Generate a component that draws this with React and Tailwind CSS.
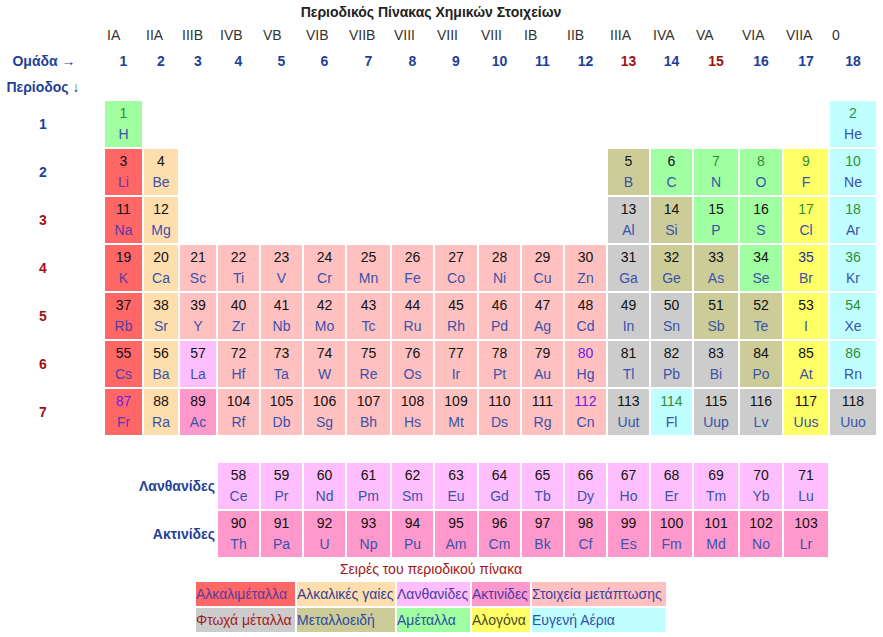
import React from "react";

const CAT = {
  alkali: "bg-[#ff6666]",
  earth: "bg-[#ffdead]",
  trans: "bg-[#ffc0c0]",
  poor: "bg-[#cccccc]",
  metalloid: "bg-[#cccc99]",
  nonmetal: "bg-[#a0ffa0]",
  halogen: "bg-[#ffff66]",
  noble: "bg-[#c0ffff]",
  lan: "bg-[#ffbfff]",
  act: "bg-[#ff99cc]",
};

const GREEN = [1, 2, 7, 8, 9, 10, 17, 18, 36, 54, 86, 114];
const PURPLE = [80, 87, 112];

const GRID =
  "grid grid-cols-[103px_37px_34px_36px_41px_41px_41px_43px_41px_42px_41px_41px_41px_41px_41px_44px_42px_44px_46px] gap-x-[2px]";

// [col, Z, symbol, category]
const periods = [
  [[1, 1, "H", "nonmetal"], [18, 2, "He", "noble"]],
  [
    [1, 3, "Li", "alkali"], [2, 4, "Be", "earth"], [13, 5, "B", "metalloid"],
    [14, 6, "C", "nonmetal"], [15, 7, "N", "nonmetal"], [16, 8, "O", "nonmetal"],
    [17, 9, "F", "halogen"], [18, 10, "Ne", "noble"],
  ],
  [
    [1, 11, "Na", "alkali"], [2, 12, "Mg", "earth"], [13, 13, "Al", "poor"],
    [14, 14, "Si", "metalloid"], [15, 15, "P", "nonmetal"], [16, 16, "S", "nonmetal"],
    [17, 17, "Cl", "halogen"], [18, 18, "Ar", "noble"],
  ],
  [
    [1, 19, "K", "alkali"], [2, 20, "Ca", "earth"], [3, 21, "Sc", "trans"],
    [4, 22, "Ti", "trans"], [5, 23, "V", "trans"], [6, 24, "Cr", "trans"],
    [7, 25, "Mn", "trans"], [8, 26, "Fe", "trans"], [9, 27, "Co", "trans"],
    [10, 28, "Ni", "trans"], [11, 29, "Cu", "trans"], [12, 30, "Zn", "trans"],
    [13, 31, "Ga", "poor"], [14, 32, "Ge", "metalloid"], [15, 33, "As", "metalloid"],
    [16, 34, "Se", "nonmetal"], [17, 35, "Br", "halogen"], [18, 36, "Kr", "noble"],
  ],
  [
    [1, 37, "Rb", "alkali"], [2, 38, "Sr", "earth"], [3, 39, "Y", "trans"],
    [4, 40, "Zr", "trans"], [5, 41, "Nb", "trans"], [6, 42, "Mo", "trans"],
    [7, 43, "Tc", "trans"], [8, 44, "Ru", "trans"], [9, 45, "Rh", "trans"],
    [10, 46, "Pd", "trans"], [11, 47, "Ag", "trans"], [12, 48, "Cd", "trans"],
    [13, 49, "In", "poor"], [14, 50, "Sn", "poor"], [15, 51, "Sb", "metalloid"],
    [16, 52, "Te", "metalloid"], [17, 53, "I", "halogen"], [18, 54, "Xe", "noble"],
  ],
  [
    [1, 55, "Cs", "alkali"], [2, 56, "Ba", "earth"], [3, 57, "La", "lan"],
    [4, 72, "Hf", "trans"], [5, 73, "Ta", "trans"], [6, 74, "W", "trans"],
    [7, 75, "Re", "trans"], [8, 76, "Os", "trans"], [9, 77, "Ir", "trans"],
    [10, 78, "Pt", "trans"], [11, 79, "Au", "trans"], [12, 80, "Hg", "trans"],
    [13, 81, "Tl", "poor"], [14, 82, "Pb", "poor"], [15, 83, "Bi", "poor"],
    [16, 84, "Po", "metalloid"], [17, 85, "At", "halogen"], [18, 86, "Rn", "noble"],
  ],
  [
    [1, 87, "Fr", "alkali"], [2, 88, "Ra", "earth"], [3, 89, "Ac", "act"],
    [4, 104, "Rf", "trans"], [5, 105, "Db", "trans"], [6, 106, "Sg", "trans"],
    [7, 107, "Bh", "trans"], [8, 108, "Hs", "trans"], [9, 109, "Mt", "trans"],
    [10, 110, "Ds", "trans"], [11, 111, "Rg", "trans"], [12, 112, "Cn", "trans"],
    [13, 113, "Uut", "poor"], [14, 114, "Fl", "noble"], [15, 115, "Uup", "poor"],
    [16, 116, "Lv", "poor"], [17, 117, "Uus", "halogen"], [18, 118, "Uuo", "poor"],
  ],
];

const lanthanides = ["Ce", "Pr", "Nd", "Pm", "Sm", "Eu", "Gd", "Tb", "Dy", "Ho", "Er", "Tm", "Yb", "Lu"];
const actinides = ["Th", "Pa", "U", "Np", "Pu", "Am", "Cm", "Bk", "Cf", "Es", "Fm", "Md", "No", "Lr"];

const roman = ["IA", "IIA", "IIIB", "IVB", "VB", "VIB", "VIIB", "VIII", "VIII", "VIII", "IB", "IIB", "IIIA", "IVA", "VA", "VIA", "VIIA", "0"];

const numColor = (z) => {
  if (GREEN.includes(z)) return "text-[#2f8f2f]";
  if (PURPLE.includes(z)) return "text-[#6a22e6]";
  if (z === 35) return "text-[#23309a]";
  return "text-[#111]";
};

const Cell = ({ z, sym, cat }) => (
  <div className={`h-[46px] pt-[2px] text-center text-[14px] leading-[21px] ${CAT[cat]}`}>
    <div className={numColor(z)}>{z}</div>
    <div className={cat === "alkali" ? "text-[#5a3aa4]" : "text-[#3a52aa]"}>{sym}</div>
  </div>
);

const PeriodRow = ({ n, items }) => {
  const slots = Array(18).fill(null);
  items.forEach(([c, z, sym, cat]) => (slots[c - 1] = { z, sym, cat }));
  return (
    <>
      <div className="flex items-center">
        <div className={`w-[86px] text-center text-[14px] font-bold ${n < 3 ? "text-[#1f3f99]" : "text-[#a31212]"}`}>
          {n}
        </div>
      </div>
      {slots.map((s, i) => (s ? <Cell key={i} {...s} /> : <div key={i} />))}
    </>
  );
};

const legend = [
  [
    ["Αλκαλιμέταλλα", "bg-[#ff6666] text-[#5a3aa4]"],
    ["Αλκαλικές γαίες", "bg-[#ffdead] text-[#2f3f99]"],
    ["Λανθανίδες", "bg-[#ffbfff] text-[#4a3aa8]"],
    ["Ακτινίδες", "bg-[#ff99cc] text-[#4a3aa8]"],
    ["Στοιχεία μετάπτωσης", "bg-[#ffc0c0] text-[#3a42a4]"],
  ],
  [
    ["Φτωχά μέταλλα", "bg-[#cccccc] text-[#a31a1a]"],
    ["Μεταλλοειδή", "bg-[#cccc99] text-[#2f4a9f]"],
    ["Αμέταλλα", "bg-[#a0ffa0] text-[#2f4fa6]"],
    ["Αλογόνα", "bg-[#ffff66] text-[#4a4a2a]"],
    ["Ευγενή Αέρια", "bg-[#c0ffff] text-[#2f4fb0]"],
  ],
];

export default function App() {
  return (
    <div className="w-[883px] h-[637px] bg-white font-['Liberation_Sans',Arial,sans-serif] overflow-hidden">
      <div className="w-[862px] h-[22px] pt-[2px] text-center text-[14px] font-bold text-[#222]">
        Περιοδικός Πίνακας Χημικών Στοιχείων
      </div>

      {/* header rows */}
      <div className={GRID}>
        <div className="h-[26px]" />
        {roman.map((r, i) => (
          <div key={i} className="h-[26px] pl-[2px] flex items-center text-[14px] text-[#333]">
            {r}
          </div>
        ))}
        <div className="h-[26px] flex items-center">
          <div className="w-[88px] text-center text-[14px] font-bold text-[#1f3f99]">Ομάδα →</div>
        </div>
        {roman.map((_, i) => (
          <div
            key={i}
            className={`h-[26px] flex items-center justify-center text-[14px] font-bold ${i === 12 || i === 14 ? "text-[#a31212]" : "text-[#1f3f99]"}`}
          >
            {i + 1}
          </div>
        ))}
        <div className="h-[26px] flex items-center">
          <div className="w-[86px] text-center text-[14px] font-bold text-[#1f3f99] whitespace-nowrap">Περίοδος ↓</div>
        </div>
      </div>

      {/* main table */}
      <div className={`${GRID} gap-y-[2px] mt-[1px]`}>
        {periods.map((items, i) => (
          <PeriodRow key={i} n={i + 1} items={items} />
        ))}
      </div>

      {/* lanthanides / actinides */}
      <div className={`${GRID} gap-y-[2px] mt-[28px]`}>
        {[
          ["Λανθανίδες", lanthanides, 58, "lan"],
          ["Ακτινίδες", actinides, 90, "act"],
        ].map(([label, syms, start, cat]) => (
          <React.Fragment key={label}>
            <div className="col-span-4 flex items-center justify-end pr-[1px] text-[14px] font-bold text-[#1f3f99]">
              {label}
            </div>
            {syms.map((s, i) => (
              <Cell key={s} z={start + i} sym={s} cat={cat} />
            ))}
            <div />
          </React.Fragment>
        ))}
      </div>

      {/* legend */}
      <div className="w-[862px] flex flex-col items-center">
        <div className="h-[25px] flex items-center text-[14px] text-[#a31515]">Σειρές του περιοδικού πίνακα</div>
        <div className="grid grid-cols-[99px_98px_73px_58px_134px] gap-[2px]">
          {legend.flat().map(([t, c]) => (
            <div key={t} className={`h-[24px] flex items-center text-[14px] whitespace-nowrap ${c}`}>
              {t}
            </div>
          ))}
        </div>
      </div>
    </div>
  );
}
